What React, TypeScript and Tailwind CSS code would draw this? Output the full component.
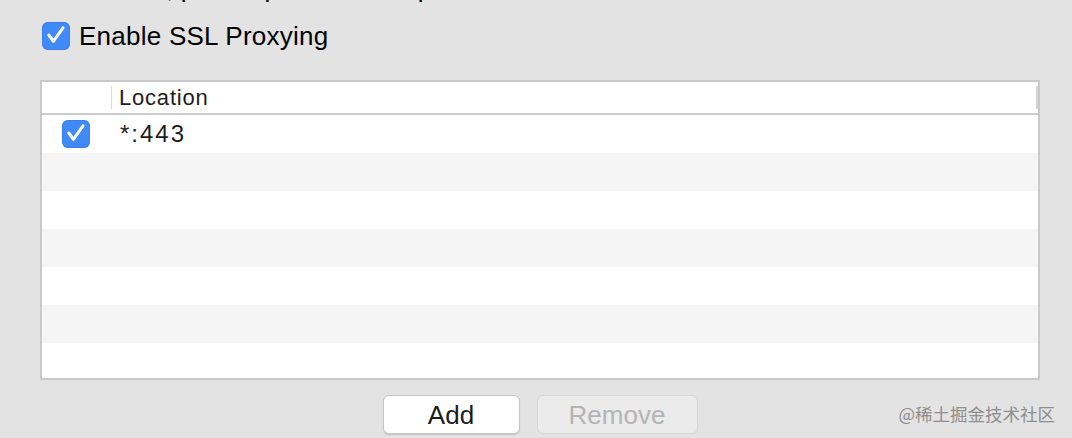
import React from 'react';

const font = { fontFamily: '"Liberation Sans", Arial, sans-serif' };

const CheckBox: React.FC = () => (
    <span className="flex h-[28px] w-[28px] items-center justify-center rounded-[6px] bg-[#3f8af6] shadow-[inset_0_0_0_1px_rgba(40,110,220,0.35)]">
        <svg width="28" height="28" viewBox="0 0 28 28" fill="none">
            <path d="M6.8 13 L11.4 19.4 L21 5.8" stroke="white" strokeWidth="3" strokeLinecap="round" strokeLinejoin="round" />
        </svg>
    </span>
);

type Row = { enabled?: boolean; location?: string };

const rows: Row[] = [
    { enabled: true, location: '*:443' },
    {}, {}, {}, {}, {}, {},
];

export default function App() {
    return (
        <div
            className="relative flex h-[438px] w-[1072px] flex-col overflow-hidden bg-[#e3e3e3] pl-[40px] text-black"
            style={font}
        >
            {/* description text scrolled mostly out of view */}
            <div className="-mt-[27px] h-[30px] whitespace-nowrap pl-[2px] text-[26px] leading-[30px]">
                certificates, please press the Help button for more information.
            </div>

            <label className="ml-[2px] mt-[19px] flex h-[28px] items-center gap-[9px]">
                <CheckBox />
                <span className="text-[26px] leading-[26px] tracking-[0.25px]">Enable SSL Proxying</span>
            </label>

            {/* locations table */}
            <div className="mt-[30px] flex h-[300px] w-[1000px] flex-col border-2 border-[#c9c9c9] bg-white">
                <div className="flex h-[33px] shrink-0 items-center border-b-2 border-[#cdcdcd]">
                    <div className="flex h-[23px] w-[70px] justify-end">
                        <span className="w-px bg-[#dcdcdc]" />
                    </div>
                    <div className="flex-1 pl-[7px] text-[22px] tracking-[0.8px] text-[#1e1e1e]">Location</div>
                    <span className="h-[23px] w-[2px] bg-[#d4d4d4]" />
                </div>
                <div className="flex flex-1 flex-col overflow-hidden">
                    {rows.map((row, i) => (
                        <div
                            key={i}
                            className={`flex h-[38px] shrink-0 items-center ${i % 2 === 1 ? 'bg-[#f5f5f5]' : 'bg-white'}`}
                        >
                            <div className="w-[70px] pl-[20px]">{row.enabled && <CheckBox />}</div>
                            <div className="pl-[8px] text-[24px] tracking-[2px] text-[#1e1e1e]">{row.location}</div>
                        </div>
                    ))}
                </div>
            </div>

            <div className="mt-[15px] flex w-[1000px] justify-center gap-[17px]">
                <button className="h-[39px] w-[137px] rounded-[6px] border border-[#c6c6c6] bg-white text-[26px] text-[#1c1c1c] shadow-[0_1px_1px_rgba(0,0,0,0.15)]">
                    Add
                </button>
                <button
                    disabled
                    className="h-[39px] w-[161px] rounded-[6px] border border-[#d6d6d6] bg-[#ebebeb] text-[26px] text-[#b4b4b4]"
                >
                    Remove
                </button>
            </div>

            {/* watermark */}
            <div
                className="absolute bottom-[14px] right-[17px] text-[17.5px] leading-[20px] text-[#8e8e8e]"
                style={{ fontFamily: '"Noto Sans CJK SC", "Liberation Sans", sans-serif' }}
            >
                @稀土掘金技术社区
            </div>
        </div>
    );
}
